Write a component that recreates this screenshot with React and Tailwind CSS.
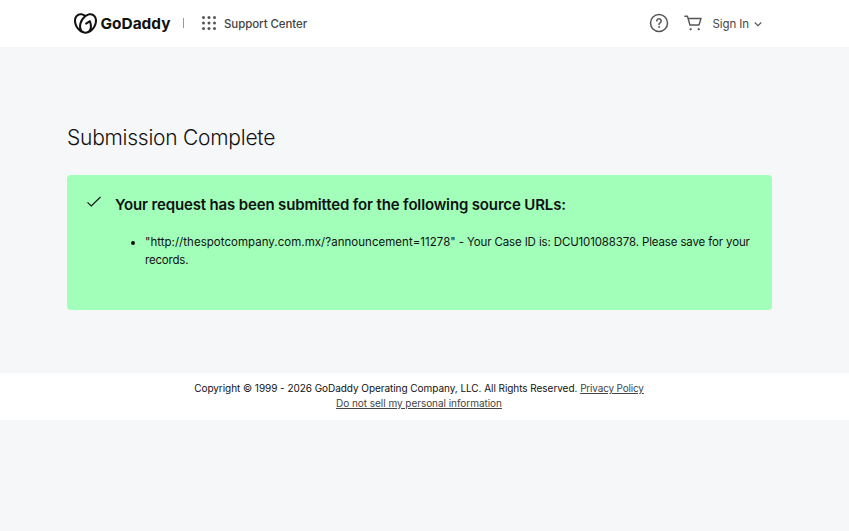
import { SiGodaddy } from "react-icons/si";

function Header() {
  return (
    <header className="flex h-[47px] items-center bg-white pl-[74px] pr-[87px] text-[#444]">
      <SiGodaddy className="-mt-[1px] h-[23px] w-[23px] text-[#111]" />
      <svg className="ml-[3px] h-[24px] w-[74px]" viewBox="0 0 74 24">
        <text x="0.5" y="17" textLength="70" lengthAdjust="spacingAndGlyphs" fontSize="15" fontWeight="700" fill="#111" className="font-['Inter',sans-serif]">GoDaddy</text>
      </svg>
      <span className="-mt-[1px] ml-[9px] h-[10px] w-px bg-[#999]" />
      <svg className="-mt-[1px] ml-[17px] h-[16px] w-[16px]" viewBox="0 0 16 16" fill="#555">
        {[2.5, 8, 13.5].map((y) => [2.5, 8, 13.5].map((x) => <circle key={`${x}-${y}`} cx={x} cy={y} r="1.5" />))}
      </svg>
      <span className="ml-[7px] mt-[1px] text-[11.5px] font-medium leading-4 tracking-[-0.08px]">Support Center</span>
      <div className="ml-auto flex items-center">
        <svg className="-mt-[1px] h-[20px] w-[20px]" viewBox="0 0 20 20" fill="none" stroke="#555" strokeWidth="1.5" strokeLinecap="round">
          <circle cx="10" cy="10" r="8.5" />
          <path d="M7.8 7.9a2.2 2.2 0 1 1 3.6 1.7c-.8.6-1.4 1-1.4 2" />
          <circle cx="10" cy="14" r=".5" fill="#555" strokeWidth=".8" />
        </svg>
        <svg className="-mt-[1px] ml-[15px] h-[18px] w-[18px]" viewBox="0 0 18 18" fill="none" stroke="#555" strokeWidth="1.4" strokeLinecap="round" strokeLinejoin="round">
          <path d="M.9 2.2h2.5L6 11h9l2-6.5H4.2" />
          <circle cx="6.5" cy="15.2" r=".7" fill="#555" strokeWidth=".8" />
          <circle cx="14.6" cy="15.2" r=".7" fill="#555" strokeWidth=".8" />
        </svg>
        <span className="ml-[11px] mt-[1px] text-[11.5px] leading-4 tracking-[-0.1px]">Sign In</span>
        <svg className="ml-[5px] h-[8px] w-[8px]" viewBox="0 0 8 8" fill="none" stroke="#555" strokeWidth="1.1">
          <path d="M.8 2.5 4 5.7 7.2 2.5" />
        </svg>
      </div>
    </header>
  );
}

export default function App() {
  return (
    <div className="min-h-screen bg-[#f5f7f9] font-['Inter',sans-serif] text-[#111]">
      <Header />
      <main className="h-[326px] px-[67px] pt-[74px]">
        <h1 className="whitespace-nowrap text-[21px] font-light leading-[33px] tracking-[-0.25px]">Submission Complete</h1>
        <section className="mt-[21px] flex h-[135px] w-[705px] rounded-[4px] bg-[#a1ffb9] pl-[20px] pt-[20px]">
          <svg className="h-[14px] w-[14px] shrink-0" viewBox="0 0 14 14" fill="none" stroke="#111" strokeWidth="1.1">
            <path d="M.5 7.3 4.3 11 13.5 2" />
          </svg>
          <div className="ml-[14px]">
            <h2 className="whitespace-nowrap text-[15px] font-semibold leading-5 tracking-[-0.15px]">Your request has been submitted for the following source URLs:</h2>
            <ul className="mt-[18px] list-disc pl-[30px] text-[11.5px] leading-[18px]">
              <li className="whitespace-nowrap">
                <span className="tracking-[0.03px]">"http://thespotcompany.com.mx/?announcement=11278"</span>
                <span className="tracking-[-0.14px]"> - Your Case ID is: DCU101088378. Please save for your</span>
                <br />
                <span className="tracking-[-0.2px]">records.</span>
              </li>
            </ul>
          </div>
        </section>
      </main>
      <footer className="h-[47px] bg-white pr-[11px] pt-[8px] text-center text-[10px] leading-[15px]">
        <p className="whitespace-nowrap">
          <span className="tracking-[-0.05px]">Copyright © 1999 - 2026 GoDaddy Operating Company, LLC. All Rights Reserved.</span>{" "}
          <a className="tracking-[-0.18px] text-[#444] underline">Privacy Policy</a>
        </p>
        <p><a className="tracking-[-0.04px] text-[#444] underline">Do not sell my personal information</a></p>
      </footer>
    </div>
  );
}
